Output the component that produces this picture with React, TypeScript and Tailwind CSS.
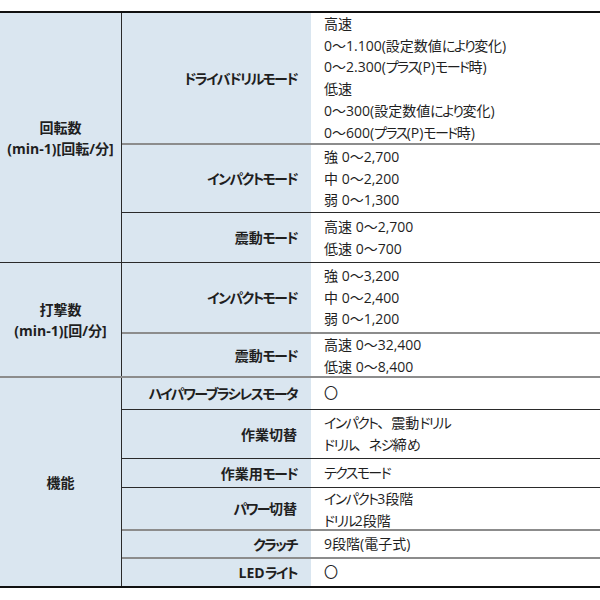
import React from 'react';

type Sub = {
  label: string;
  lines: string[];
  h: string; // row height incl. bottom border
  pt: string;
  line: string; // bottom border style
};

type Group = {
  title: string[];
  line: string;
  rows: Sub[];
};

const DARK = 'border-b border-[#2a2a2a]';
const GRAY = 'border-b-2 border-[#8c8c8c]';

const groups: Group[] = [
  {
    title: ['回転数', '(min-1)[回転/分]'],
    line: DARK,
    rows: [
      {
        label: 'ドライバドリルモード',
        lines: ['高速', '0～1.100(設定数値により変化)', '0～2.300(プラス(P)モード時)', '低速', '0～300(設定数値により変化)', '0～600(プラス(P)モード時)'],
        h: 'h-[132px]',
        pt: 'pt-0',
        line: GRAY,
      },
      { label: 'インパクトモード', lines: ['強 0～2,700', '中 0～2,200', '弱 0～1,300'], h: 'h-[68px]', pt: 'pt-[1px]', line: DARK },
      { label: '震動モード', lines: ['高速 0～2,700', '低速 0～700'], h: 'h-[49px]', pt: 'pt-[3px]', line: '' },
    ],
  },
  {
    title: ['打撃数', '(min-1)[回/分]'],
    line: GRAY,
    rows: [
      { label: 'インパクトモード', lines: ['強 0～3,200', '中 0～2,400', '弱 0～1,200'], h: 'h-[71px]', pt: 'pt-[2px]', line: GRAY },
      { label: '震動モード', lines: ['高速 0～32,400', '低速 0～8,400'], h: 'h-[42px]', pt: 'pt-0', line: '' },
    ],
  },
  {
    title: ['機能'],
    line: '',
    rows: [
      { label: 'ハイパワーブラシレスモータ', lines: ['〇'], h: 'h-[32px]', pt: 'pt-[4px]', line: DARK },
      { label: '作業切替', lines: ['インパクト、震動ドリル', 'ドリル、ネジ締め'], h: 'h-[49px]', pt: 'pt-[2px]', line: DARK },
      { label: '作業用モード', lines: ['テクスモード'], h: 'h-[29px]', pt: 'pt-[3px]', line: DARK },
      { label: 'パワー切替', lines: ['インパクト3段階', 'ドリル2段階'], h: 'h-[43px]', pt: 'pt-0', line: GRAY },
      { label: 'クラッチ', lines: ['9段階(電子式)'], h: 'h-[28px]', pt: 'pt-[2px]', line: GRAY },
      { label: 'LEDライト', lines: ['〇'], h: 'h-[27px]', pt: 'pt-[2px]', line: '' },
    ],
  },
];

// kana in the original font is narrow, so tighten kana runs
const Txt = ({ s }: { s: string }) => (
  <>
    {s.split(/([\u3041-\u30ff]+|、)/).map((part, i) => {
      if (!part) return null;
      if (part === '、') return <span key={i} className="[font-feature-settings:normal]">、</span>;
      if (/^[\u3041-\u30ff]+$/.test(part)) return <span key={i} className="tracking-[-1.6px]">{part}</span>;
      return <span key={i}>{part}</span>;
    })}
  </>
);

export default function App() {
  return (
    <div className="w-[600px] h-[600px] bg-white pt-[11px] text-[#1f1f1f] text-[14px] font-['Open_Sans','Noto_Sans_CJK_JP',sans-serif] [font-feature-settings:'palt']">
      <div className="border-t-2 border-b-2 border-[#111]">
        {groups.map((g, gi) => (
          <div key={gi} className={`flex ${g.line}`}>
            <div className="w-[122px] shrink-0 bg-[#dae6f0] border-r border-[#2a2a2a] flex flex-col items-center justify-center font-bold leading-[21px]">
              {g.title.map((t, i) => (
                <div key={i}>{t}</div>
              ))}
            </div>
            <div className="flex-1 flex flex-col">
              {g.rows.map((r, ri) => (
                <div key={ri} className={`flex ${r.h} ${r.line}`}>
                  <div className="w-[189px] shrink-0 bg-[#dae6f0] flex items-center justify-end pr-[14px] font-bold whitespace-nowrap">
                    <Txt s={r.label} />
                  </div>
                  <div className={`flex-1 pl-[13px] leading-[21.7px] ${r.pt}`}>
                    {r.lines.map((l, li) => (
                      <div key={li}>
                        <Txt s={l} />
                      </div>
                    ))}
                  </div>
                </div>
              ))}
            </div>
          </div>
        ))}
      </div>
    </div>
  );
}
